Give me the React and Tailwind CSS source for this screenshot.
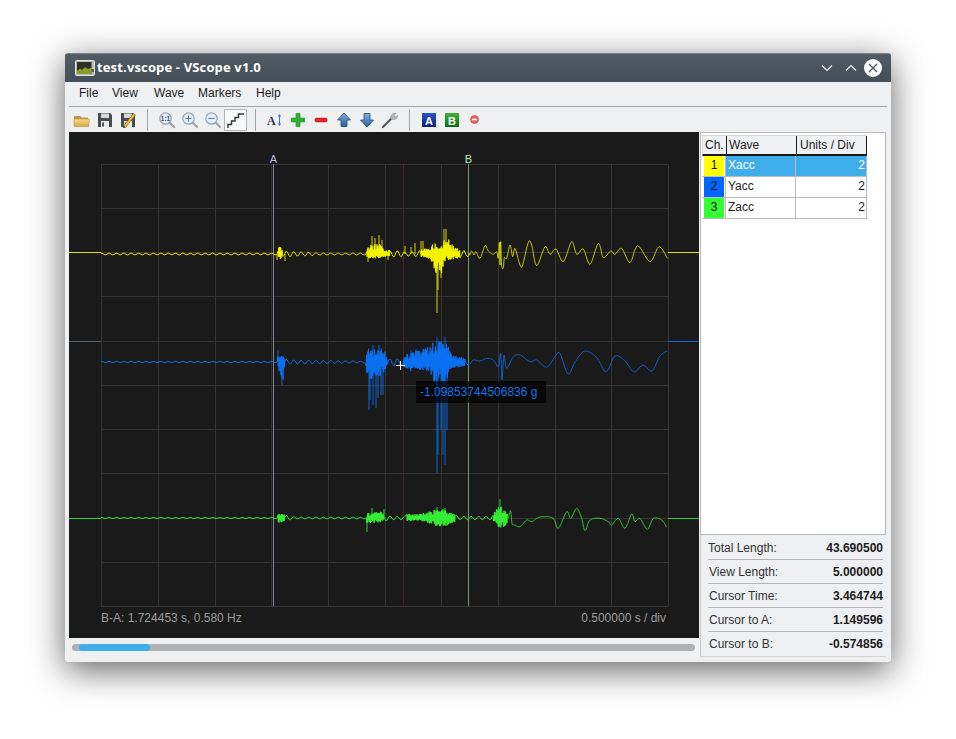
import React from "react";

const X0 = 69, Y0 = 132;

function mulberry(seed) {
  let a = seed;
  return () => {
    a |= 0; a = (a + 0x6d2b79f5) | 0;
    let t = Math.imul(a ^ (a >>> 15), 1 | a);
    t = (t + Math.imul(t ^ (t >>> 7), 61 | t)) ^ t;
    return ((t ^ (t >>> 14)) >>> 0) / 4294967296;
  };
}

function envAt(env, x) {
  for (let i = 0; i < env.length - 1; i++) {
    const a = env[i], b = env[i + 1];
    if (x >= a[0] && x <= b[0]) {
      const t = (x - a[0]) / (b[0] - a[0] || 1);
      return [a[1] + (b[1] - a[1]) * t, a[2] + (b[2] - a[2]) * t];
    }
  }
  return [0, 0];
}

function buildTrace(base, env, seed) {
  const r = mulberry(seed);
  const pts = [];
  const end = env[env.length - 1][0];
  let flip = false;
  for (let x = 101; x <= end; ) {
    const [u, d] = envAt(env, x);
    const amp = Math.max(u, d);
    if (amp < 4) {
      pts.push([x, base + Math.sin(x * 0.85) * amp * (0.7 + r() * 0.3)]);
      x += 1;
    } else {
      flip = !flip;
      const k = 0.35 + 0.65 * r();
      pts.push([x, flip ? base - u * k : base + d * k]);
      x += 0.34;
    }
  }
  return pts;
}

function smooth(pts) {
  const out = [];
  for (let i = 0; i < pts.length - 1; i++) {
    const p0 = pts[i - 1] || pts[i], p1 = pts[i], p2 = pts[i + 1], p3 = pts[i + 2] || p2;
    for (let t = 0; t < 1; t += 0.2) {
      const t2 = t * t, t3 = t2 * t;
      out.push([
        0.5 * (2 * p1[0] + (p2[0] - p0[0]) * t + (2 * p0[0] - 5 * p1[0] + 4 * p2[0] - p3[0]) * t2 + (3 * p1[0] - p0[0] - 3 * p2[0] + p3[0]) * t3),
        0.5 * (2 * p1[1] + (p2[1] - p0[1]) * t + (2 * p0[1] - 5 * p1[1] + 4 * p2[1] - p3[1]) * t2 + (3 * p1[1] - p0[1] - 3 * p2[1] + p3[1]) * t3),
      ]);
    }
  }
  out.push(pts[pts.length - 1]);
  return out;
}

const toStr = (pts) => pts.map((p) => `${(p[0] - X0).toFixed(2)},${(p[1] - Y0).toFixed(2)}`).join(" ");
const zoomPts = (arr, ox, oy) => arr.map(([a, b]) => [ox + a / 3, oy + b / 3]);

const yellowEnv = [[101,1,1],[277,1,1],[278,6,6],[280,9,6],[283,3,2],[290,3,3],[325,1,1],[365,1,1],[367,6,4],[372,10,5],[380,10,5],[385,5,3],[392,3.5,3],[403,3.5,3],[405,2,2],[420,4,3],[430,8,5],[436,12,20],[441,8,22],[446,24,6],[452,10,6],[460,3.9,3.9],[470,3,3]];
const yellowSpikes = [[372,236],[375,238],[379,235],[382,240],[415,243],[421,241],[423,241],[437,313],[438,290],[444,229],[446,229],[441,278],[388,260],[368,262],[277,260],[285,261],[405,246],[411,247]];
const yellowTail = zoomPts([[0,90],[5,78],[12,90],[18,80],[30,100],[45,62],[55,78],[70,88],[80,80],[85,100],[88,52],[90,120],[92,50],[95,122],[100,128],[103,98],[110,100],[120,60],[128,95],[135,70],[150,120],[158,120],[175,52],[185,60],[200,122],[225,65],[240,88],[258,72],[280,110],[305,50],[320,88],[340,72],[360,118],[385,55],[400,98],[422,78],[435,88],[455,70],[480,113],[503,62],[540,110],[567,65],[592,100]], 470, 225);

const blueEnv = [[101,0.7,0.7],[277,0.7,0.7],[278,6,8],[281,12,14],[283,8,20],[285,3.5,3.5],[290,2.5,2],[365,1,1],[367,14,14],[370,15,18],[378,15,16],[384,13,10],[387,3.9,3],[403,3.9,3],[406,8,8],[412,10,10],[420,12,8],[430,16,10],[436,25,25],[440,20,15],[444,22,25],[448,18,15],[452,8,8],[460,5,5],[470,3,3]];
const blueSpikes = [[369,410],[370,400],[373,405],[376,408],[378,398],[381,395],[383,395],[437,473],[438,455],[441,430],[443,455],[445,465],[447,430],[373,345],[379,345],[437,337],[445,337],[411,350],[416,349],[282,385],[278,350]];
const blueTail = [...zoomPts([[630,88],[640,75],[660,78],[680,70],[700,75],[715,95],[722,55],[726,135],[732,60],[740,100],[760,65],[780,60],[810,80],[830,75],[860,97],[885,65],[900,55]], 260, 335), [568,374],[575,362],[585,351],[597,358],[606,372],[615,356],[625,361],[634,372],[643,365],[652,371],[660,356],[667,351]];

const greenEnv = [[101,0.6,0.6],[277,0.6,0.6],[278,5,5],[285,4,4],[290,2,1],[296,1,1],[365,1,1],[367,5,6],[372,6,5],[380,7,5],[385,3,2],[392,2,2],[404,2,2],[406,4,3],[420,4,3],[428,6,5],[436,9,9],[444,9,9],[450,6,6],[460,2,2],[490,2,2],[493,4,4],[497,10,8],[500,16,10],[505,8,10],[508,3,3]];
const greenSpikes = [[367,532],[500,499],[372,508],[384,509],[437,507],[445,508],[441,525]];
const greenTail = zoomPts([[745,85],[752,62],[756,100],[765,105],[780,110],[800,90],[815,95],[830,85],[850,80],[880,85],[895,115],[920,65],[932,85],[950,55],[965,85],[975,122],[990,90],[1020,85],[1045,95],[1055,105],[1075,85],[1095,115],[1115,72],[1125,95],[1140,85],[1162,118],[1180,85],[1205,90],[1220,112]], 260, 490);

const VLINES = [101, 157.5, 214.5, 271, 327.5, 384.5, 440.5, 497.5, 554.5, 610.5, 667.5];
const HLINES = [164.5, 208.5, 252.5, 296.5, 341.5, 385.5, 429.5, 473.5, 518.5, 562.5, 606.5];

function Scope() {
  const traces = [
    { c: "#f6f600", base: 254, env: yellowEnv, sp: yellowSpikes, tail: yellowTail, seed: 11 },
    { c: "#0b72f5", base: 362, env: blueEnv, sp: blueSpikes, tail: blueTail, seed: 23 },
    { c: "#35f035", base: 518, env: greenEnv, sp: greenSpikes, tail: greenTail, seed: 37 },
  ];
  return (
    <svg width="630" height="478" className="block">
      {VLINES.map((x) => (
        <line key={x} x1={Math.round(x) - X0 + 0.5} x2={Math.round(x) - X0 + 0.5} y1={32.5} y2={474.5} stroke="#353535" />
      ))}
      {HLINES.map((y) => (
        <line key={y} x1={32} x2={599} y1={y - Y0} y2={y - Y0} stroke="#353535" />
      ))}
      <line x1={334.5} x2={334.5} y1={32} y2={474} stroke="#4a2527" />
      <line x1={204.5} x2={204.5} y1={32} y2={474} stroke="#85859c" />
      <line x1={399.5} x2={399.5} y1={32} y2={474} stroke="#6f9b70" />
      <line x1={0} x2={32} y1={120.5} y2={120.5} stroke="#e0e000" />
      <line x1={599} x2={630} y1={120.5} y2={120.5} stroke="#e0e000" />
      <line x1={0} x2={32} y1={209.5} y2={209.5} stroke="#566478" />
      <line x1={599} x2={630} y1={209.5} y2={209.5} stroke="#0b66d8" />
      <line x1={0} x2={32} y1={386.5} y2={386.5} stroke="#35d035" />
      <line x1={599} x2={630} y1={386.5} y2={386.5} stroke="#35d035" />
      {traces.map((t) => (
        <g key={t.c} fill="none" stroke={t.c}>
          <polyline points={toStr(buildTrace(t.base, t.env, t.seed))} strokeWidth="1" strokeOpacity="0.9" />
          <polyline points={toStr(smooth(t.tail))} strokeWidth="1" strokeOpacity="0.75" />
          {t.sp.map(([x, y], i) => (
            <line key={i} x1={x - X0} x2={x - X0} y1={t.base - Y0} y2={y - Y0} strokeWidth="1" strokeOpacity="0.85" />
          ))}
        </g>
      ))}
      <text x={204.5} y={31} textAnchor="middle" fontSize="11" fill="#b9b9e6" fontFamily="Liberation Sans">A</text>
      <text x={399.5} y={31} textAnchor="middle" fontSize="11" fill="#b6f0b6" fontFamily="Liberation Sans">B</text>
      <path d="M327 233.5h9M331.5 229v9" stroke="#fff" strokeWidth="1" />
    </svg>
  );
}

const Ic = ({ children }) => (
  <svg width="18" height="18" viewBox="0 0 18 18" className="block">{children}</svg>
);

const Folder = () => (
  <Ic>
    <defs><linearGradient id="fg" x1="0" y1="0" x2="0" y2="1"><stop offset="0" stopColor="#f6dc8e" /><stop offset="1" stopColor="#d9a63c" /></linearGradient></defs>
    <path d="M1 5h6l1.5 1.5H15V9H1z" fill="#b99b4f" />
    <path d="M1 15.5 L1 8 H16.5 L15.5 15.5 Z" fill="url(#fg)" stroke="#b8933c" strokeWidth="0.6" />
  </Ic>
);
const Floppy = () => (
  <>
    <path d="M2 2h12l2 2v12H2z" fill="#4a4d50" />
    <rect x="5" y="2.5" width="8" height="4.5" fill="#d8d8d8" />
    <rect x="5" y="10" width="8" height="6" fill="#e9e9e9" />
    <rect x="6" y="11.5" width="2" height="4" fill="#555" />
  </>
);
const Save = () => <Ic><Floppy /></Ic>;
const SaveAs = () => (
  <Ic>
    <Floppy />
    <path d="M4.5 15 L14.5 2.5 L16.5 4 L6.5 16.5 Z" fill="#e9b92f" stroke="#8a6510" strokeWidth="0.6" />
    <path d="M4.5 15 L4 17 L6.5 16.5 Z" fill="#222" />
  </Ic>
);
const Mag = ({ children }) => (
  <Ic>
    <circle cx="7.5" cy="7.5" r="5.7" fill="#e4eef8" stroke="#8fa8c0" strokeWidth="1.2" />
    <path d="M11.8 11.8 L16 16" stroke="#a0a4a8" strokeWidth="2.2" strokeLinecap="round" />
    {children}
  </Ic>
);
const Steps = () => (
  <svg width="18" height="18" viewBox="0 0 18 18" className="block">
    <path d="M1 17v-3.5h3.5V10H8V6.5h3.5V3H17" fill="none" stroke="#333" strokeWidth="1.4" />
  </svg>
);
const TextSize = () => (
  <Ic>
    <text x="1" y="14" fontSize="12" fontWeight="700" fill="#2b3a4e" fontFamily="Liberation Serif">A</text>
    <path d="M13.5 4v10" stroke="#3a77c8" strokeWidth="1" />
    <path d="M11.8 5.5l1.7-2.5 1.7 2.5zM11.8 12.5l1.7 2.5 1.7-2.5z" fill="#3a77c8" />
  </Ic>
);
const Plus = () => (
  <Ic>
    <path d="M7 2.5h4v4.5h4.5v4H11v4.5H7V11H2.5V7H7z" fill="#2fb12f" stroke="#1c8a1c" strokeWidth="0.6" />
  </Ic>
);
const Minus = () => (
  <Ic>
    <rect x="3" y="7" width="12" height="4" rx="1.3" fill="#e0262c" stroke="#b3161b" strokeWidth="0.5" />
  </Ic>
);
const Up = () => (
  <Ic>
    <defs><linearGradient id="ag" x1="0" y1="0" x2="0" y2="1"><stop offset="0" stopColor="#7fb0de" /><stop offset="1" stopColor="#2d5f9d" /></linearGradient></defs>
    <path d="M9 2 L15.5 9 H12 V15.5 H6 V9 H2.5 Z" fill="url(#ag)" stroke="#1f4a80" strokeWidth="0.8" />
  </Ic>
);
const Down = () => (
  <Ic>
    <defs><linearGradient id="ag2" x1="0" y1="0" x2="0" y2="1"><stop offset="0" stopColor="#7fb0de" /><stop offset="1" stopColor="#2d5f9d" /></linearGradient></defs>
    <path d="M9 16 L15.5 9 H12 V2.5 H6 V9 H2.5 Z" fill="url(#ag2)" stroke="#1f4a80" strokeWidth="0.8" />
  </Ic>
);
const Wrench = () => (
  <Ic>
    <path d="M2 16 L11 7" stroke="#55585c" strokeWidth="2.2" strokeLinecap="round" />
    <path d="M10 8 C9 5 11 2 15 2 L13 4.5 L14 6 L16.5 4.5 C16.5 8 13 9.5 10 8Z" fill="#b4b6b8" stroke="#808284" strokeWidth="0.5" />
  </Ic>
);
const Letter = ({ ch, a, b, id }) => (
  <svg width="14" height="14" viewBox="0 0 14 14" className="block">
    <defs><linearGradient id={id} x1="0" y1="0" x2="0" y2="1"><stop offset="0" stopColor={a} /><stop offset="1" stopColor={b} /></linearGradient></defs>
    <rect width="14" height="14" fill={`url(#${id})`} />
    <text x="7" y="11.5" textAnchor="middle" fontSize="11" fontWeight="700" fill="#fff" fontFamily="Liberation Sans">{ch}</text>
  </svg>
);
const Stop = () => (
  <svg width="9" height="9" viewBox="0 0 9 9" className="block">
    <circle cx="4.5" cy="4.5" r="4" fill="#e8655a" stroke="#c9433a" strokeWidth="0.6" />
    <rect x="2" y="3.7" width="5" height="1.6" fill="#fff" />
  </svg>
);

const TitleIcon = () => (
  <svg width="20" height="16" viewBox="0 0 20 16" className="block">
    <rect x="0.5" y="0.5" width="19" height="15" rx="1" fill="#b9bcb8" stroke="#e2e2de" />
    <rect x="2" y="2" width="14.5" height="12" fill="#2c3022" />
    <path d="M2 11 L5 8.5 L7 10 L10 7 L13 9 L16.5 7.5 V14 H2Z" fill="#8a9c2a" />
    <rect x="17.2" y="9" width="1.6" height="3" fill="#444" />
  </svg>
);

const Slot = ({ children, cls = "" }) => (
  <div className={`w-[23px] h-[22px] flex items-center justify-center ${cls}`}>{children}</div>
);
const Sep = () => <div className="w-px h-[22px] bg-[#a6a6a6] mx-[8px]" />;

const ROWS = [
  { n: "1", name: "Xacc", c: "bg-[#ffff00]", sel: true },
  { n: "2", name: "Yacc", c: "bg-[#0066ff]" },
  { n: "3", name: "Zacc", c: "bg-[#33ff33]" },
];

const STATS = [
  ["Total Length:", "43.690500"],
  ["View Length:", "5.000000"],
  ["Cursor Time:", "3.464744"],
  ["Cursor to A:", "1.149596"],
  ["Cursor to B:", "-0.574856"],
];

export default function App() {
  return (
    <div className="w-[956px] h-[739px] bg-white pl-[65px] pt-[53px] overflow-hidden font-['Liberation_Sans',sans-serif] text-[12px] text-[#1c1c1c]">
      <div className="w-[826px] h-[609px] flex flex-col bg-[#eff0f1] rounded-[3px] overflow-hidden shadow-[0_8px_34px_rgba(0,0,0,0.62)]">
        <div className="h-[29px] flex items-center pl-[10px] pr-[9px] bg-gradient-to-b from-[#525c64] to-[#434e57] border-t border-[#7d858b]">
          <TitleIcon />
          <span className="ml-[2px] pl-[0px] text-white font-bold text-[13px] tracking-[0.15px] font-['Open_Sans',sans-serif] ml-[2px]">test.vscope - VScope v1.0</span>
          <div className="ml-auto flex items-center">
            <svg width="12" height="8" viewBox="0 0 12 8" className="mr-[12px]"><path d="M1 1.5l5 5 5-5" fill="none" stroke="#eef0f1" strokeWidth="1.2" /></svg>
            <svg width="12" height="8" viewBox="0 0 12 8" className="mr-[7px]"><path d="M1 6.5l5-5 5 5" fill="none" stroke="#eef0f1" strokeWidth="1.2" /></svg>
            <div className="w-[18px] h-[18px] rounded-full bg-[#fafafa] flex items-center justify-center">
              <svg width="10" height="10" viewBox="0 0 10 10"><path d="M1 1l8 8M9 1l-8 8" stroke="#4c565e" strokeWidth="1.3" /></svg>
            </div>
          </div>
        </div>

        <div className="h-[24px] flex items-center pl-[14px] pb-[2px]">
          <span className="w-[33px]">File</span>
          <span className="w-[42px]">View</span>
          <span className="w-[44px]">Wave</span>
          <span className="w-[58px]">Markers</span>
          <span>Help</span>
        </div>
        <div className="h-px bg-[#a8a8a8] ml-[4px] mr-[4px]" />

        <div className="h-[25px] flex items-center pl-[5px]">
          <Slot><Folder /></Slot>
          <Slot><Save /></Slot>
          <Slot><SaveAs /></Slot>
          <Sep />
          <Slot cls="ml-[-1px]"><Mag><text x="7.5" y="10" textAnchor="middle" fontSize="6.5" fontWeight="700" fill="#556" fontFamily="Liberation Sans">1:1</text></Mag></Slot>
          <Slot><Mag><path d="M4.5 7.5h6M7.5 4.5v6" stroke="#5a7896" strokeWidth="1" /></Mag></Slot>
          <Slot><Mag><path d="M4.5 7.5h6" stroke="#5a7896" strokeWidth="1" /></Mag></Slot>
          <Slot cls="border border-[#b4b4b4] bg-[#f8f9f9]"><Steps /></Slot>
          <Sep />
          <Slot cls="ml-[-1px]"><TextSize /></Slot>
          <Slot><Plus /></Slot>
          <Slot><Minus /></Slot>
          <Slot><Up /></Slot>
          <Slot><Down /></Slot>
          <Slot><Wrench /></Slot>
          <Sep />
          <Slot cls="ml-[-1px]"><Letter ch="A" a="#2a54c8" b="#0b1f78" id="la" /></Slot>
          <Slot><Letter ch="B" a="#3fb23f" b="#0b6a0b" id="lb" /></Slot>
          <Slot><Stop /></Slot>
        </div>

        <div className="flex-1 flex min-h-0">
          <div className="w-[635px] pl-[4px] flex flex-col">
            <div className="relative w-[630px] h-[506px] bg-[#1a1a1a]">
              <Scope />
              <div className="flex justify-between pl-[32px] pr-[33px] text-[#9c9c9c] mt-[1px] leading-[14px]">
                <span>B-A: 1.724453 s, 0.580 Hz</span>
                <span>0.500000 s / div</span>
              </div>
              <div className="absolute left-[347px] top-[249px] w-[130px] h-[22px] pl-[4px] flex items-center bg-black/70 text-[#1272e6]">-1.09853744506836 g</div>
            </div>
            <div className="mt-[6px] ml-[3px] w-[623px] h-[7px] rounded-full bg-[#b0b1b2] pl-[7px]">
              <div className="w-[71px] h-[7px] rounded-full bg-[#3daee9]" />
            </div>
          </div>

          <div className="w-[186px] flex flex-col mb-[5px] border-b border-[#d4d4d4] shrink-0">
            <div className="h-[403px] shrink-0 bg-white border border-[#b8b8b8] pl-[1px] pt-[2px]">
              <div className="w-[165px]">
                <div className="flex h-[21px] border-b-2 border-[#1a1a1a] bg-[#eff0f1] border-t border-l border-[#d8d8d8] border-b-[#1a1a1a]">
                  <div className="w-[24px] border-r border-[#1a1a1a] pl-[2px] leading-[19px]">Ch.</div>
                  <div className="w-[70px] border-r border-[#1a1a1a] pl-[2px] leading-[19px]">Wave</div>
                  <div className="flex-1 border-r border-[#1a1a1a] pl-[3px] leading-[19px]">Units / Div</div>
                </div>
                {ROWS.map((r) => (
                  <div key={r.n} className={`flex h-[21px] border-b border-[#bcbcbc] ${r.sel ? "bg-[#3daee9] text-white" : "bg-white"}`}>
                    <div className="w-[24px] border-r border-[#bcbcbc] bg-white pl-[2px] pr-[1px] pb-0">
                      <div className={`h-[20px] ${r.c} text-center text-[#111] leading-[19px]`}>{r.n}</div>
                    </div>
                    <div className="w-[70px] border-r border-[#bcbcbc] pl-[2px] leading-[19px]">{r.name}</div>
                    <div className="flex-1 border-r border-[#bcbcbc] text-right pr-[1px] leading-[19px]">2</div>
                  </div>
                ))}
              </div>
            </div>
            <div className="flex-1 border-l border-[#c4c4c4] pl-[7px] pr-[3px] pt-[1px]">
              {STATS.map(([k, v], i) => (
                <div key={k} className={`h-[24px] flex items-center justify-between ${i < 4 ? "border-b border-[#b4b4b4]" : ""}`}>
                  <span className={i === 0 ? "text-[#333]" : "text-[#333] pl-[1px]"}>{k}</span>
                  <span className="font-bold">{v}</span>
                </div>
              ))}
            </div>
          </div>
        </div>
      </div>
    </div>
  );
}
